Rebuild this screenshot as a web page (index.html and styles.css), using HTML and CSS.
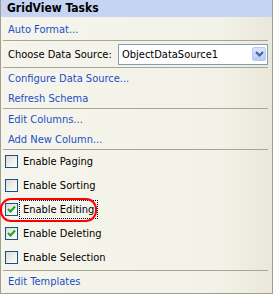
FILE: index.html
```html
<!DOCTYPE html>
<html>
<head>
<meta charset="utf-8">
<link rel="stylesheet" href="styles.css">
</head>
<body>
<div class="panel">
  <div class="header">GridView Tasks</div>
  <div class="section one">
    <a class="link">Auto Format...</a>
  </div>
  <div class="section ds">
    <span class="label">Choose Data Source:</span>
    <div class="select">
      <span class="value">ObjectDataSource1</span>
      <span class="btn"><svg width="9" height="6" viewBox="0 0 9 6"><path d="M1 1 L4.5 4.5 L8 1" fill="none" stroke="#4d6185" stroke-width="2"/></svg></span>
    </div>
  </div>
  <div class="section two">
    <a class="link">Configure Data Source...</a>
    <a class="link">Refresh Schema</a>
  </div>
  <div class="section two">
    <a class="link">Edit Columns...</a>
    <a class="link">Add New Column...</a>
  </div>
  <div class="section checks">
    <label class="check"><span class="box"></span><span class="text">Enable Paging</span></label>
    <label class="check"><span class="box"></span><span class="text">Enable Sorting</span></label>
    <label class="check"><span class="box on"><svg width="9" height="9" viewBox="0 0 9 9"><path d="M1 4 L3.5 6.5 L8 1.5" fill="none" stroke="#21a121" stroke-width="2"/></svg></span><span class="text focus">Enable Editing</span></label>
    <label class="check"><span class="box on"><svg width="9" height="9" viewBox="0 0 9 9"><path d="M1 4 L3.5 6.5 L8 1.5" fill="none" stroke="#21a121" stroke-width="2"/></svg></span><span class="text">Enable Deleting</span></label>
    <label class="check"><span class="box"></span><span class="text">Enable Selection</span></label>
  </div>
  <div class="section last">
    <a class="link">Edit Templates</a>
  </div>
  <div class="highlight"></div>
</div>
</body>
</html>
```

FILE: styles.css
```css
html, body {
  margin: 0;
  padding: 0;
}
body {
  font-family: "DejaVu Sans Condensed", "DejaVu Sans", "Liberation Sans", sans-serif;
  font-size: 11px;
  color: #000;
  background: #fff;
}
.panel {
  position: relative;
  width: 271px;
  height: 293px;
  border-left: 1px solid #a19e8c;
  border-right: 1px solid #a19e8c;
  border-bottom: 1px solid #a19e8c;
  background: linear-gradient(to right, #f6f5ed 0%, #f3f2e8 80%, #eae8da 100%);
  display: flex;
  flex-direction: column;
}
.header {
  height: 17px;
  line-height: 16px;
  background: #c6d3f2;
  font-weight: bold;
  font-size: 12px;
  padding-left: 6px;
}
.section {
  margin: 0 4px 0 2px;
  border-bottom: 1px solid #a8a593;
  display: flex;
  flex-direction: column;
  padding-left: 5px;
  box-sizing: border-box;
}
.link {
  color: #1a4fc4;
  height: 20px;
  line-height: 20px;
}
.one {
  height: 24px;
  padding-top: 3px;
}
.ds {
  flex-direction: row;
  align-items: center;
  height: 28px;
}
.label {
  white-space: nowrap;
}
.select {
  margin-left: auto;
  width: 150px;
  height: 21px;
  box-sizing: border-box;
  border: 1px solid #7f9db9;
  background: #fff;
  display: flex;
  align-items: center;
  justify-content: space-between;
}
.value {
  padding-left: 3px;
}
.btn {
  width: 12px;
  height: 12px;
  margin-right: 1px;
  border: 1px solid #b6c8f5;
  border-radius: 2px;
  background: linear-gradient(#dbe5fd, #b8cbf6);
  display: flex;
  align-items: center;
  justify-content: center;
}
.two {
  height: 41px;
  padding-top: 1px;
}
.two .link {
  height: 20px;
}
.checks {
  height: 121px;
  padding-left: 2px;
}
.check {
  height: 24px;
  box-sizing: border-box;
  padding-top: 5px;
  display: flex;
  align-items: flex-start;
  gap: 4px;
}
.box {
  width: 11px;
  height: 11px;
  border: 1px solid #1c5180;
  background: linear-gradient(135deg, #dcdcd5, #ffffff);
  display: flex;
  align-items: center;
  justify-content: center;
}
.text {
  line-height: 13px;
  padding: 0 1px;
}
.focus {
  outline: 1px dotted #000;
  outline-offset: 2px;
}
.last {
  border-bottom: none;
  height: 22px;
  justify-content: center;
}
.highlight {
  position: absolute;
  left: -1px;
  top: 198px;
  width: 93px;
  height: 20px;
  border: 2px solid #f00;
  border-radius: 11px;
}
```
